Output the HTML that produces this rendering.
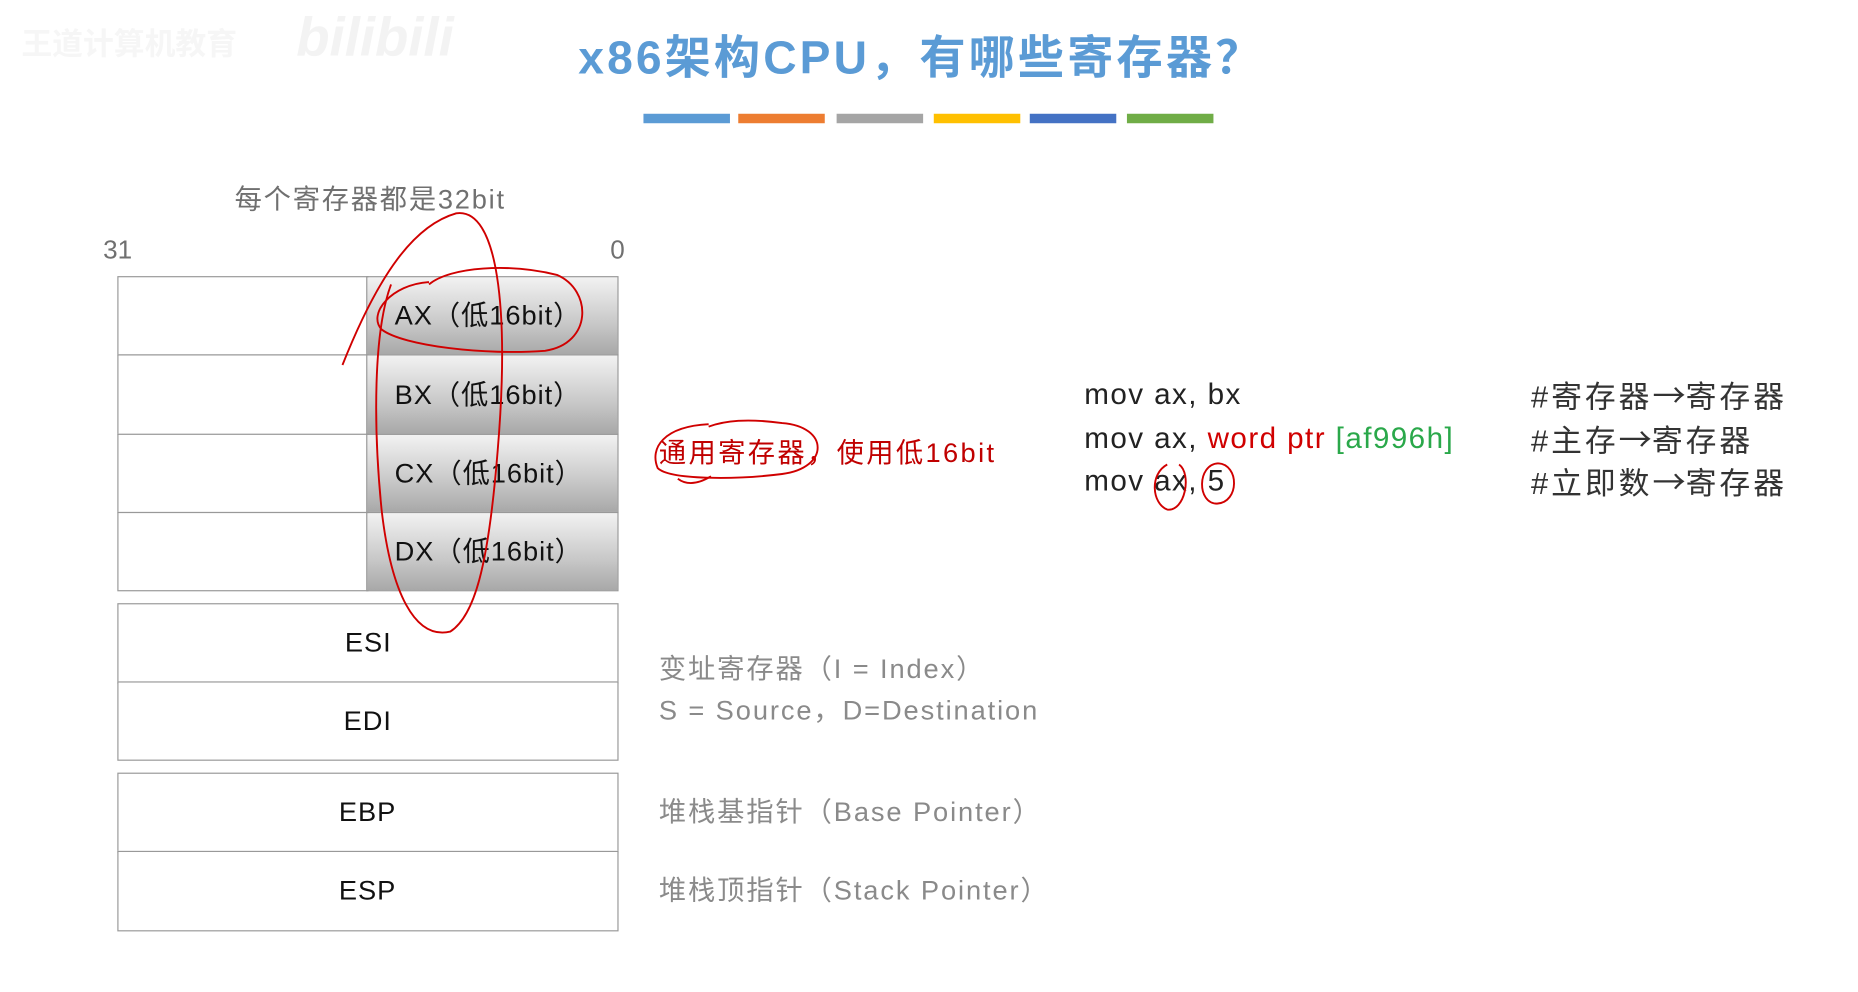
<!DOCTYPE html>
<html><head><meta charset="utf-8"><style>
html,body{margin:0;padding:0;background:#fff;width:1858px;height:992px;overflow:hidden}
#s{position:absolute;left:0;top:0;width:1568px;height:837px;transform:scale(1.185);transform-origin:0 0;font-family:"Liberation Sans","Noto Sans CJK SC",sans-serif}
.t{position:absolute;white-space:nowrap;line-height:1}
.bar{position:absolute;top:96px;height:8px;width:73px}
.box{position:absolute;border:1.5px solid #999;box-sizing:border-box;background:#fff}
.g{position:absolute;box-sizing:border-box;border:1.5px solid #999;background:linear-gradient(#f2f2f2,#c8c8c8 60%,#a8a8a8)}
.rt{font-size:23px;color:#111;letter-spacing:0.8px}
.gray{font-size:23px;color:#8a8a8a;letter-spacing:1.6px}
.code{font-size:25px;color:#222;letter-spacing:1.2px}
.cm{font-size:26px;color:#333;letter-spacing:2.5px}
.ar{font-family:"Noto Sans CJK SC",sans-serif;font-size:28px;letter-spacing:0}
</style></head><body><div id="s">
<div class="t" style="left:18px;top:24px;font-size:26px;color:#f6f6f6;font-weight:bold">王道计算机教育</div>
<div class="t" style="left:250px;top:8px;font-size:46px;color:#f3f3f3;font-weight:bold;font-style:italic">bilibili</div>
<div class="t" style="left:488px;top:30px;font-size:39px;color:#5b9bd5;font-weight:bold;letter-spacing:2.6px">x86架构CPU，有哪些寄存器？</div>
<div class="bar" style="left:543px;background:#5b9bd5"></div>
<div class="bar" style="left:623px;background:#ed7d31"></div>
<div class="bar" style="left:706px;background:#a5a5a5"></div>
<div class="bar" style="left:788px;background:#ffc000"></div>
<div class="bar" style="left:869px;background:#4472c4"></div>
<div class="bar" style="left:951px;background:#70ad47"></div>

<div class="t" style="left:198px;top:157px;font-size:23px;color:#707070;letter-spacing:1.5px">每个寄存器都是32bit</div>
<div class="t" style="left:87px;top:200px;font-size:22px;color:#707070">31</div>
<div class="t" style="left:515px;top:200px;font-size:22px;color:#707070">0</div>

<div class="box" style="left:99px;top:233px;width:212px;height:67px"></div>
<div class="box" style="left:99px;top:299px;width:212px;height:68px"></div>
<div class="box" style="left:99px;top:366px;width:212px;height:67px"></div>
<div class="box" style="left:99px;top:432px;width:212px;height:67px"></div>
<div class="g" style="left:309px;top:233px;width:213px;height:67px"></div>
<div class="g" style="left:309px;top:299px;width:213px;height:68px"></div>
<div class="g" style="left:309px;top:366px;width:213px;height:67px"></div>
<div class="g" style="left:309px;top:432px;width:213px;height:67px"></div>
<div class="t rt" style="left:333px;top:255px">AX（低16bit）</div>
<div class="t rt" style="left:333px;top:322px">BX（低16bit）</div>
<div class="t rt" style="left:333px;top:388px">CX（低16bit）</div>
<div class="t rt" style="left:333px;top:454px">DX（低16bit）</div>

<div class="box" style="left:99px;top:509px;width:423px;height:68px"></div>
<div class="box" style="left:99px;top:575px;width:423px;height:67px"></div>
<div class="box" style="left:99px;top:652px;width:423px;height:68px"></div>
<div class="box" style="left:99px;top:718px;width:423px;height:68px"></div>
<div class="t rt" style="left:291px;top:531px">ESI</div>
<div class="t rt" style="left:290px;top:597px">EDI</div>
<div class="t rt" style="left:286px;top:674px">EBP</div>
<div class="t rt" style="left:286px;top:740px">ESP</div>

<div class="t" style="left:556px;top:371px;font-size:23px;color:#c00000;letter-spacing:2px">通用寄存器，使用低16bit</div>
<div class="t gray" style="left:556px;top:553px">变址寄存器（I = Index）</div>
<div class="t gray" style="left:556px;top:588px">S = Source，D=Destination</div>
<div class="t gray" style="left:556px;top:674px">堆栈基指针（Base Pointer）</div>
<div class="t gray" style="left:556px;top:740px">堆栈顶指针（Stack Pointer）</div>

<div class="t code" style="left:915px;top:321px">mov ax, bx</div>
<div class="t code" style="left:915px;top:358px">mov ax, <span style="color:#d00000">word ptr</span> <span style="color:#2aa84a">[af996h]</span></div>
<div class="t code" style="left:915px;top:394px">mov ax, 5</div>
<div class="t cm" style="left:1292px;top:319px">#寄存器<span class="ar">→</span>寄存器</div>
<div class="t cm" style="left:1292px;top:356px">#主存<span class="ar">→</span>寄存器</div>
<div class="t cm" style="left:1292px;top:392px">#立即数<span class="ar">→</span>寄存器</div>

<svg width="1568" height="837" style="position:absolute;left:0;top:0" fill="none" stroke="#d00000" stroke-width="1.6">
<path d="M362 240 C380 225 430 222 470 232 C500 245 500 290 460 296 C410 300 340 292 322 278 C310 265 330 240 362 238"/>
<path d="M289 308 C320 230 350 190 385 180 C420 175 430 260 420 380 C412 480 400 520 380 533 C350 540 330 500 322 430 C315 360 315 280 330 240"/>
<path d="M598 358 C560 360 548 378 555 395 C565 405 620 405 660 400 C700 395 700 360 660 357 C630 353 612 355 598 360"/>
<path d="M572 404 C580 410 590 408 600 402"/>
<path d="M985 392 C970 400 972 425 985 430 C1000 432 1006 400 995 392"/>
<path d="M1028 391 C1010 392 1010 425 1027 425 C1046 424 1046 392 1028 391"/>
</svg>
</div></body></html>
